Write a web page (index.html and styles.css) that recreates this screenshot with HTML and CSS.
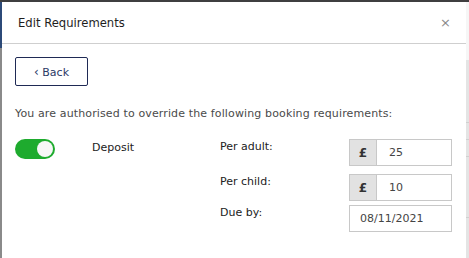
FILE: index.html
```html
<!DOCTYPE html>
<html lang="en">
<head>
    <meta charset="UTF-8">
    <title>Edit Requirements</title>
    <link rel="stylesheet" href="styles.css">
</head>
<body>
    <div class="backdrop">
        <div class="edge-left"></div>

        <div class="modal">
            <div class="modal-header">
                <span class="modal-title">Edit Requirements</span>
                <span class="close">&times;</span>
            </div>

            <div class="modal-body">
                <button class="btn-back"><span class="chev">&lsaquo;</span> Back</button>

                <p class="intro">You are authorised to override the following booking requirements:</p>

                <div class="req-row">
                    <div class="toggle"><span class="knob"></span></div>
                    <div class="req-name">Deposit</div>

                    <div class="fields">
                        <div class="field">
                            <label>Per adult:</label>
                            <div class="input-group">
                                <span class="addon">&pound;</span>
                                <input type="text" value="25">
                            </div>
                        </div>
                        <div class="field">
                            <label>Per child:</label>
                            <div class="input-group">
                                <span class="addon">&pound;</span>
                                <input type="text" value="10">
                            </div>
                        </div>
                        <div class="field due">
                            <label>Due by:</label>
                            <div class="input-group">
                                <input type="text" class="date" value="08/11/2021">
                            </div>
                        </div>
                    </div>
                </div>
            </div>
        </div>

        <div class="edge-right">
            <div class="stripe s1"></div>
            <div class="stripe s2"></div>
            <div class="stripe s3"></div>
            <div class="stripe s4"></div>
        </div>
    </div>
</body>
</html>
```

FILE: styles.css
```css
body {
    margin: 0;
    font-family: "DejaVu Sans", sans-serif;
    background-color: #e6e6e6;
    color: #222;
}

.backdrop {
    display: flex;
    height: 258px;
    border-top: 2px solid #3f3f40;
    box-sizing: border-box;
    overflow: hidden;
}

.edge-left {
    width: 2px;
    background: linear-gradient(#2c4a78 0, #2c4a78 46px, #8a8a8a 46px);
}

.modal {
    flex: 1;
    background-color: white;
}

.edge-right {
    width: 3px;
    background: linear-gradient(#f6f6f6 0, #f6f6f6 58px, #e4e4e4 58px);
    position: relative;
}

.stripe {
    position: absolute;
    left: 0;
    right: 0;
    height: 1px;
    background-color: #d0d0d0;
}

.s1 { top: 120px; }
.s2 { top: 137px; }
.s3 { top: 154px; }
.s4 { top: 215px; }

.modal-header {
    height: 41px;
    border-bottom: 1px solid #cfcfcf;
    display: flex;
    align-items: center;
    justify-content: space-between;
    padding: 0 15px 0 16px;
}

.modal-title {
    font-size: 11.6px;
    color: #1e1e1e;
}

.close {
    color: #8a8a8a;
    font-size: 13px;
}

.modal-body {
    padding: 13px 13px;
}

.btn-back {
    width: 73px;
    height: 29px;
    background: white;
    border: 1px solid #1f2a55;
    border-radius: 2px;
    font-family: inherit;
    font-size: 11px;
    color: #2b3a66;
    padding: 0;
}

.chev {
    font-size: 12px;
}

.intro {
    font-size: 11px;
    letter-spacing: 0.13px;
    color: #4a4a4a;
    margin: 21px 0 19px;
}

.req-row {
    display: flex;
    align-items: flex-start;
}

.toggle {
    width: 40px;
    height: 20px;
    border-radius: 10px;
    background-color: #1eab2e;
    display: flex;
    align-items: center;
    justify-content: flex-end;
    padding: 0 2px;
    box-sizing: border-box;
}

.knob {
    width: 16px;
    height: 16px;
    border-radius: 50%;
    background-color: #f7f7f7;
}

.req-name {
    font-size: 11px;
    margin: 2px 0 0 37px;
    width: 128px;
}

.fields {
    display: flex;
    flex-direction: column;
    gap: 8px;
}

.field {
    display: flex;
    align-items: flex-start;
}

.field.due {
    margin-top: -4px;
}

.field label {
    font-size: 11px;
    width: 129px;
    margin-top: 1px;
}

.input-group {
    display: flex;
    height: 27px;
    width: 103px;
    border: 1px solid #c8c8c8;
    box-sizing: border-box;
}

.addon {
    width: 26px;
    background-color: #e2e2e2;
    border-right: 1px solid #c8c8c8;
    display: flex;
    align-items: center;
    justify-content: center;
    font-size: 12px;
    font-weight: bold;
    color: #333;
}

.input-group input {
    border: none;
    outline: none;
    flex: 1;
    min-width: 0;
    padding: 0 0 0 12px;
    font-family: inherit;
    font-size: 11px;
    color: #444;
}

.input-group input.date {
    padding-left: 10px;
}
```
